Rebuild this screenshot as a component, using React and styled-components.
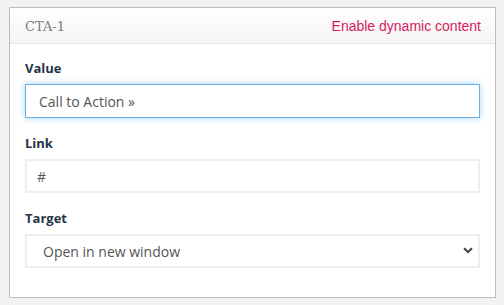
import React from "react";
import styled, { createGlobalStyle } from "styled-components";

const Global = createGlobalStyle`
  html, body { margin: 0; padding: 0; background: #f2f2f2; }
  body { font-family: "Open Sans", "Liberation Sans", sans-serif; }
  * { box-sizing: border-box; }
`;

const Page = styled.div`
  padding: 7px 0 0 9px;
  height: 305px;
`;

const Panel = styled.section`
  width: 487px;
  height: 291px;
  border: 1px solid #bdbdbd;
  background: #fff;
  display: flex;
  flex-direction: column;
`;

const Header = styled.header`
  height: 36px;
  padding: 0 14px 0 15px;
  display: flex;
  align-items: center;
  justify-content: space-between;
  background: linear-gradient(#ffffff, #f4f4f4);
  border-bottom: 1px solid #e6e6e6;
`;

const Title = styled.span`
  font-family: "DejaVu Serif", "Liberation Serif", serif;
  font-size: 13px;
  color: #7a7a7a;
  padding-top: 1px;
`;

const DynamicLink = styled.a`
  font-family: "Liberation Sans", Arial, sans-serif;
  font-size: 14px;
  color: #d81b60;
  text-decoration: none;
  cursor: pointer;
`;

const Body = styled.div`
  padding: 14px 15px;
`;

const Field = styled.div`
  margin-bottom: 15px;
  display: flex;
  flex-direction: column;
`;

const Label = styled.label`
  font-family: "Open Sans", sans-serif;
  font-weight: 700;
  font-size: 13px;
  line-height: 20px;
  color: #263548;
  margin-bottom: 6px;
`;

const Input = styled.input`
  width: 455px;
  height: 34px;
  padding: 0 12px;
  font-family: "Open Sans", sans-serif;
  font-size: 14px;
  color: #555;
  background: #fff;
  outline: none;
  border: ${(p) => (p.$focused ? "1px solid #66afe9" : "2px solid #eeeeee")};
  padding-left: ${(p) => (p.$focused ? "13px" : "10px")};
  box-shadow: ${(p) =>
    p.$focused ? "0 0 7px rgba(102,175,233,0.55)" : "none"};
`;

const SelectBox = styled.div`
  position: relative;
  width: 455px;
  height: 34px;
`;

const Select = styled.select`
  appearance: none;
  width: 100%;
  height: 100%;
  padding: 0 16px;
  font-family: "Open Sans", sans-serif;
  font-size: 14px;
  color: #555;
  background: #fff;
  border: 2px solid #eeeeee;
  border-radius: 0;
  outline: none;
`;

const Chevron = styled.svg`
  position: absolute;
  right: 7px;
  top: 13px;
  pointer-events: none;
`;

export default function App() {
  return (
    <Page>
      <Global />
      <Panel>
        <Header>
          <Title>CTA-1</Title>
          <DynamicLink>Enable dynamic content</DynamicLink>
        </Header>
        <Body>
          <Field>
            <Label>Value</Label>
            <Input $focused defaultValue="Call to Action »" />
          </Field>
          <Field>
            <Label>Link</Label>
            <Input defaultValue="#" />
          </Field>
          <Field>
            <Label>Target</Label>
            <SelectBox>
              <Select defaultValue="new">
                <option value="new">Open in new window</option>
                <option value="same">Open in same window</option>
              </Select>
              <Chevron width="10" height="7" viewBox="0 0 10 7">
                <path d="M1 1.2 L5 5 L9 1.2" fill="none" stroke="#444" strokeWidth="2" />
              </Chevron>
            </SelectBox>
          </Field>
        </Body>
      </Panel>
    </Page>
  );
}
